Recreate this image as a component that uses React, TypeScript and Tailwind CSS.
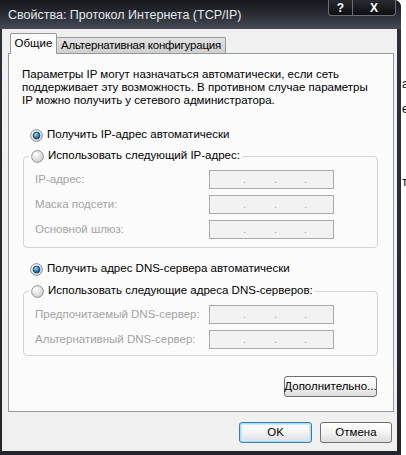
import React from "react";

function Radio({ checked }: { checked: boolean }) {
  return (
    <svg width="13" height="13" viewBox="0 0 13 13" className="shrink-0">
      <defs>
        <radialGradient id="rbg" cx="35%" cy="30%" r="85%">
          <stop offset="0" stopColor="#ffffff" />
          <stop offset="1" stopColor="#c4c6c9" />
        </radialGradient>
        <radialGradient id="rdot" cx="40%" cy="35%" r="75%">
          <stop offset="0" stopColor="#9fdcf6" />
          <stop offset="0.55" stopColor="#2c7fb6" />
          <stop offset="1" stopColor="#0d3659" />
        </radialGradient>
      </defs>
      <circle cx="6.5" cy="6.5" r="5.9" fill="url(#rbg)" stroke="#8d949b" strokeWidth="1" />
      {checked && <circle cx="6.5" cy="6.5" r="3.4" fill="url(#rdot)" stroke="#1b3b57" strokeWidth="0.8" />}
    </svg>
  );
}

function IpBox() {
  return (
    <div className="h-[19px] w-[125px] border border-[#a9a9a9] bg-[#f2f2f2] flex items-end pb-[3px] text-[#a6a6a6] text-[11px] leading-none">
      <span className="w-[33px]" />
      <span className="w-[31px]">.</span>
      <span className="w-[30px]">.</span>
      <span>.</span>
    </div>
  );
}

function Field({ label }: { label: string }) {
  return (
    <div className="ml-[11px] grid grid-cols-[174px_125px] items-center h-[19px]">
      <span className="text-[#a3a3a3]">{label}</span>
      <IpBox />
    </div>
  );
}

function RadioRow({ checked, label }: { checked: boolean; label: string }) {
  return (
    <div className="flex items-center gap-[4px] h-[16px]">
      <Radio checked={checked} />
      <span>{label}</span>
    </div>
  );
}

function Btn({ children, w, focus }: { children: React.ReactNode; w: string; focus?: boolean }) {
  return (
    <div
      className={
        "h-[21px] flex items-center justify-center rounded-[3px] bg-gradient-to-b from-[#ffffff] via-[#f3f3f3] to-[#dcdcdc] " +
        w +
        (focus
          ? " border border-[#3d7bad] shadow-[inset_0_0_0_1px_#a6dbf4,inset_0_0_0_2px_#c9ecfb]"
          : " border border-[#707070]")
      }
    >
      {children}
    </div>
  );
}

export default function App() {
  return (
    <div
      className="w-[406px] h-[455px] bg-white flex overflow-hidden text-[11.5px] text-black"
      style={{ fontFamily: '"Liberation Sans", Arial, sans-serif' }}
    >
      <div className="w-[401px] h-[455px] shrink-0 flex flex-col bg-gradient-to-b from-[#2d3038] to-[#23252b] rounded-tr-[7px]">
        {/* Title bar */}
        <div className="h-[29px] flex items-start bg-gradient-to-b from-[#15171c] via-[#2a2d35] to-[#474b55] rounded-tr-[7px]">
          <span className="ml-[8px] mt-[7px] text-[12.5px] text-[#e6e8ec] leading-[16px]">
            Свойства: Протокол Интернета (TCP/IP)
          </span>
          <div className="ml-auto mr-[5px] flex h-[16px]">
            <div className="w-[25px] h-[16px] flex items-center justify-center bg-gradient-to-b from-[#2a2b2f] to-[#0e0f12] border border-[#6b6f78] border-t-0 rounded-bl-[4px] text-white font-bold text-[12px] leading-none">
              ?
            </div>
            <div className="w-[43px] h-[16px] flex items-center justify-center bg-gradient-to-b from-[#2a2b2f] to-[#0e0f12] border border-l-0 border-[#6b6f78] border-t-0 rounded-br-[4px] text-white font-bold text-[12px] leading-none">
              X
            </div>
          </div>
        </div>

        {/* Body */}
        <div className="flex-1 ml-[2px] mr-[4px] mb-[4px] bg-[#f0f0f0] flex flex-col">
          {/* Tabs */}
          <div className="flex items-end h-[24px] pt-[4px] pl-[8px] relative z-10">
            <div className="h-[21px] w-[47px] flex items-center justify-center bg-[#fbfbfb] border border-b-0 border-[#919b9c] rounded-t-[2px] -mb-px">
              Общие
            </div>
            <div className="h-[16px] w-[169px] flex items-center justify-center bg-gradient-to-b from-[#e2e2e2] to-[#cfcfcf] border border-l-0 border-b-0 border-[#919b9c] rounded-tr-[2px] whitespace-nowrap tracking-[-0.2px]">
              Альтернативная конфигурация
            </div>
          </div>

          {/* Panel */}
          <div className="ml-[6px] w-[386px] h-[359px] border border-[#919b9c] bg-[#fbfbfb] flex flex-col">
            <p className="mt-[14px] ml-[13px] leading-[13px]">
              Параметры IP могут назначаться автоматически, если сеть
              <br />
              поддерживает эту возможность. В противном случае параметры
              <br />
              IP можно получить у сетевого администратора.
            </p>

            <div className="mt-[20px] ml-[21px]">
              <RadioRow checked label="Получить IP-адрес автоматически" />
            </div>

            <fieldset className="mt-[5px] ml-[14px] w-[355px] border border-[#d5d5cc] rounded-[4px] pt-[6px] pb-[8px] flex flex-col gap-[6px]">
              <legend className="ml-[5px] px-[2px]">
                <RadioRow checked={false} label="Использовать следующий IP-адрес:" />
              </legend>
              <Field label="IP-адрес:" />
              <Field label="Маска подсети:" />
              <Field label="Основной шлюз:" />
            </fieldset>

            <div className="mt-[13px] ml-[21px]">
              <RadioRow checked label="Получить адрес DNS-сервера автоматически" />
            </div>

            <fieldset className="mt-[6px] ml-[14px] w-[355px] border border-[#d5d5cc] rounded-[4px] pt-[6px] pb-[6px] flex flex-col gap-[6px]">
              <legend className="ml-[5px] px-[2px]">
                <RadioRow checked={false} label="Использовать следующие адреса DNS-серверов:" />
              </legend>
              <Field label="Предпочитаемый DNS-сервер:" />
              <Field label="Альтернативный DNS-сервер:" />
            </fieldset>

            <div className="mt-[20px] ml-[275px]">
              <Btn w="w-[93px]">Дополнительно...</Btn>
            </div>
          </div>

          {/* Bottom buttons */}
          <div className="mt-[10px] flex justify-end gap-[8px] mr-[5px]">
            <Btn w="w-[73px]" focus>
              OK
            </Btn>
            <Btn w="w-[72px]">Отмена</Btn>
          </div>
        </div>
      </div>

      {/* Background fragments */}
      <div className="flex-1 overflow-hidden relative text-[12px] leading-[14px]">
        <div className="mt-[77px] ml-[1px] whitespace-nowrap">а</div>
        <div className="mt-[11px] ml-[1px] whitespace-nowrap">е</div>
        <div className="mt-[59px] ml-[1px] whitespace-nowrap">ті</div>
      </div>
    </div>
  );
}
